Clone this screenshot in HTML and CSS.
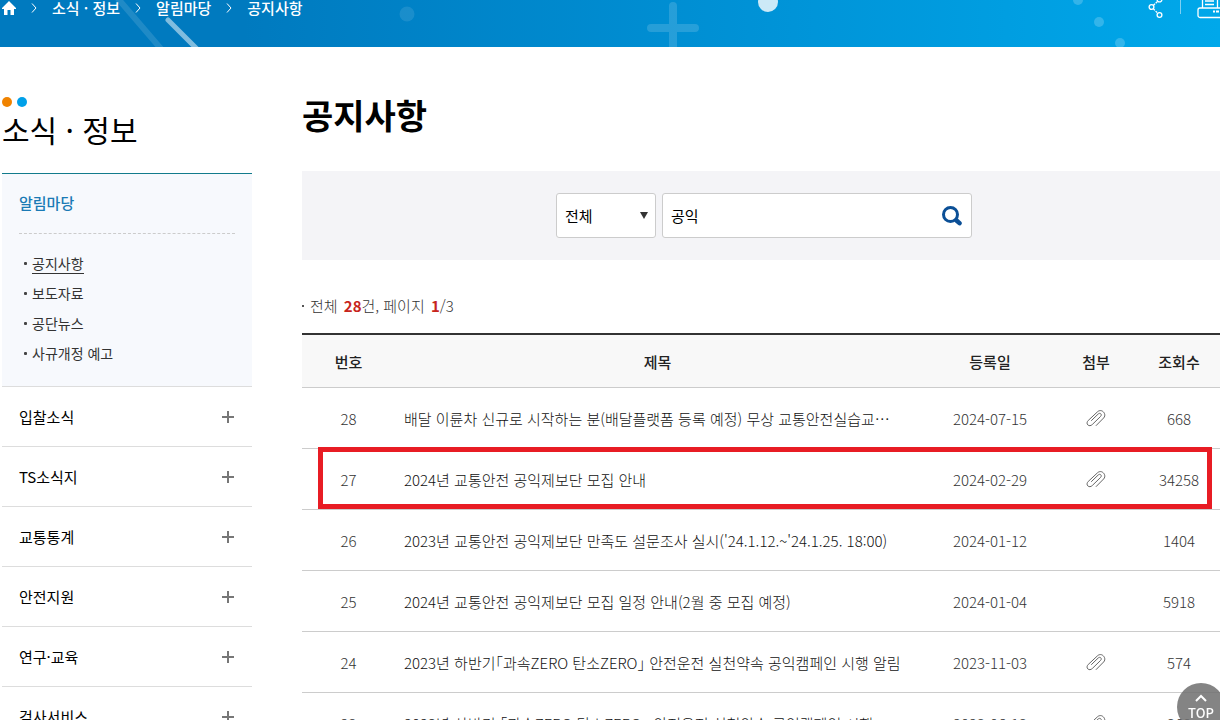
FILE: index.html
```html
<!DOCTYPE html>
<html lang="ko">
<head>
    <meta charset="UTF-8">
    <meta name="viewport" content="width=device-width, initial-scale=1.0">
    <title>공지사항</title>
    <link rel="stylesheet" href="styles.css">
</head>
<body>
    <svg class="defs" width="0" height="0">
        <symbol id="clip" viewBox="0 0 20 18">
            <path d="M10.2 16.5 17.6 9c2.600-2.600.6-6.500-2.200-7.300-1.500-.4-2.900.1-4 1.200L2.200 11.500c-1.400 1.400-1.500 3.200-.4 4.400 1.200 1.200 3.100 1 4.500-.4l8.200-8c.9-.9 1-2 .3-2.700-.7-.7-1.800-.6-2.700.3L5.500 11.500" fill="none" stroke="#666" stroke-width="1" stroke-linecap="round"/>
        </symbol>
    </svg>

    <header class="banner">
        <svg class="banner-art" width="1220" height="47" viewBox="0 0 1220 47">
            <g stroke="#fff" stroke-linecap="round" fill="none">
                <path d="M114-6l48 56" stroke-width="6" opacity=".12"/>
                <path d="M168 20l30 30" stroke-width="5" opacity=".5"/>
                <path d="M673 6v45M651 28h44" stroke-width="8" opacity=".15"/>
            </g>
            <g fill="#fff">
                <circle cx="407" cy="14" r="7.500" opacity=".1"/>
                <circle cx="768" cy="2" r="10" opacity=".8"/>
                <circle cx="1078" cy="0" r="5" opacity=".2"/>
                <circle cx="1099" cy="22" r="5" opacity=".2"/>
                <circle cx="1120" cy="43" r="5" opacity=".2"/>
            </g>
        </svg>
        <nav class="breadcrumb">
            <a href="#" aria-label="홈">
                <svg width="14" height="14" viewBox="0 0 14 14"><path d="M7 0 0 7v1h2v6h3.500V9h3v5H12V8h2V7z" fill="#fff"/></svg>
            </a>
            <svg class="arrow" width="6" height="10" viewBox="0 0 6 10"><path d="M1 .5 5 5 1 9.500"/></svg>
            <a href="#">소식 · 정보</a>
            <svg class="arrow" width="6" height="10" viewBox="0 0 6 10"><path d="M1 .5 5 5 1 9.500"/></svg>
            <a href="#">알림마당</a>
            <svg class="arrow" width="6" height="10" viewBox="0 0 6 10"><path d="M1 .5 5 5 1 9.500"/></svg>
            <a href="#">공지사항</a>
        </nav>
        <div class="tools">
            <button type="button" aria-label="공유">
                <svg width="16" height="20" viewBox="0 0 16 20" fill="none" stroke="#fff" stroke-width="1.300">
                    <circle cx="3.500" cy="7" r="2.400"/><circle cx="11.500" cy="-.5" r="2.400"/><circle cx="11.500" cy="15" r="2.400"/>
                    <path d="M5.500 5.200 9.500 1.500M5.500 9l4 4" stroke-dasharray="2 1"/>
                </svg>
            </button>
            <span class="bar"></span>
            <button type="button" aria-label="인쇄">
                <svg width="26" height="20" viewBox="0 0 26 20" fill="none" stroke="#fff" stroke-width="1.300">
                    <path d="M5.500 8V-2h15V8M8 1h9M8 4.500h9"/>
                    <rect x="1" y="8" width="24" height="9.500" rx="2"/>
                    <path d="M16 11.500h2M19 11.500h3" stroke-width="2"/>
                </svg>
            </button>
        </div>
    </header>

    <div class="page">
        <aside class="sidebar">
            <div class="dots"><span></span><span></span></div>
            <h2>소식 · 정보</h2>
            <div class="current">
                <a class="current-title" href="#">알림마당</a>
                <ul>
                    <li><a class="on" href="#">공지사항</a></li>
                    <li><a href="#">보도자료</a></li>
                    <li><a href="#">공단뉴스</a></li>
                    <li><a href="#">사규개정 예고</a></li>
                </ul>
            </div>
            <ul class="menu">
                <li><a href="#">입찰소식</a></li>
                <li><a href="#">TS소식지</a></li>
                <li><a href="#">교통통계</a></li>
                <li><a href="#">안전지원</a></li>
                <li><a href="#">연구·교육</a></li>
                <li><a href="#">검사서비스</a></li>
            </ul>
        </aside>

        <main>
            <h1>공지사항</h1>

            <form class="search">
                <select aria-label="검색 구분">
                    <option>전체</option>
                    <option>제목</option>
                    <option>내용</option>
                </select>
                <div class="search-box">
                    <input type="text" value="공익" aria-label="검색어">
                    <button type="button" aria-label="검색">
                        <svg width="20" height="20" viewBox="0 0 20 20" fill="none" stroke="#0b4f96">
                            <circle cx="8.500" cy="8.500" r="7" stroke-width="3"/>
                            <path d="M14.500 14.500 17.500 17.200" stroke-width="4.500" stroke-linecap="round"/>
                        </svg>
                    </button>
                </div>
            </form>

            <p class="total">전체 <strong>28</strong>건, 페이지 <strong>1</strong>/3</p>

            <table>
                <thead>
                    <tr>
                        <th class="num">번호</th>
                        <th>제목</th>
                        <th class="date">등록일</th>
                        <th class="file">첨부</th>
                        <th class="hit">조회수</th>
                    </tr>
                </thead>
                <tbody>
                    <tr>
                        <td>28</td>
                        <td class="subject"><a href="#">배달 이륜차 신규로 시작하는 분(배달플랫폼 등록 예정) 무상 교통안전실습교…</a></td>
                        <td>2024-07-15</td>
                        <td><svg class="clip"><use href="#clip"/></svg></td>
                        <td class="hit">668</td>
                    </tr>
                    <tr class="marked">
                        <td>27</td>
                        <td class="subject"><a href="#">2024년 교통안전 공익제보단 모집 안내</a></td>
                        <td>2024-02-29</td>
                        <td><svg class="clip"><use href="#clip"/></svg></td>
                        <td class="hit">34258</td>
                    </tr>
                    <tr>
                        <td>26</td>
                        <td class="subject"><a href="#">2023년 교통안전 공익제보단 만족도 설문조사 실시('24.1.12.~'24.1.25. 18:00)</a></td>
                        <td>2024-01-12</td>
                        <td></td>
                        <td class="hit">1404</td>
                    </tr>
                    <tr>
                        <td>25</td>
                        <td class="subject"><a href="#">2024년 교통안전 공익제보단 모집 일정 안내(2월 중 모집 예정)</a></td>
                        <td>2024-01-04</td>
                        <td></td>
                        <td class="hit">5918</td>
                    </tr>
                    <tr>
                        <td>24</td>
                        <td class="subject"><a href="#">2023년 하반기｢과속ZERO 탄소ZERO｣ 안전운전 실천약속 공익캠페인 시행 알림</a></td>
                        <td>2023-11-03</td>
                        <td><svg class="clip"><use href="#clip"/></svg></td>
                        <td class="hit">574</td>
                    </tr>
                    <tr>
                        <td>23</td>
                        <td class="subject"><a href="#">2023년 상반기 ｢과속ZERO 탄소ZERO｣ 안전운전 실천약속 공익캠페인 시행…</a></td>
                        <td>2023-06-13</td>
                        <td><svg class="clip"><use href="#clip"/></svg></td>
                        <td class="hit">368</td>
                    </tr>
                </tbody>
            </table>
        </main>
    </div>

    <button type="button" class="top-btn" onclick="window.scrollTo(0, 0)">
        <svg width="12" height="8" viewBox="0 0 12 8"><path d="M1 7l5-5 5 5" fill="none" stroke="#fff" stroke-width="2"/></svg>
        TOP
    </button>
</body>
</html>
```
FILE: styles.css
```css
* {
    box-sizing: border-box;
}

body {
    margin: 0;
    font-family: "Noto Sans CJK KR", sans-serif;
    font-size: 15px;
    color: #000;
    background: #fff;
    overflow-x: hidden;
}

a {
    color: inherit;
    text-decoration: none;
}

ul {
    list-style: none;
    margin: 0;
    padding: 0;
}

button {
    border: none;
    background: none;
    padding: 0;
    cursor: pointer;
}

svg {
    display: block;
}

.defs {
    position: absolute;
}

/* Top banner */
.banner {
    position: relative;
    height: 47px;
    display: flex;
    justify-content: space-between;
    align-items: flex-start;
    padding-left: 2px;
    background: linear-gradient(90deg, #007abf 20%, #0094d8 65%, #00a8ea);
    overflow: hidden;
}

.banner-art {
    position: absolute;
    top: 0;
    left: 0;
}

.breadcrumb {
    position: relative;
    display: flex;
    align-items: center;
    height: 15px;
    gap: 15px;
    color: #fff;
    font-size: 15px;
    font-weight: 500;
    white-space: nowrap;
}

.arrow path {
    fill: none;
    stroke: #fff;
}

.tools {
    position: relative;
    display: flex;
    gap: 16px;
    margin-right: -3px;
}

.bar {
    width: 1px;
    height: 14px;
    background: #7fd0f3;
}

/* Page columns */
.page {
    display: flex;
    gap: 50px;
    padding-left: 2px;
}

.sidebar {
    flex: 0 0 250px;
    padding-top: 50px;
}

.dots {
    display: flex;
    gap: 5px;
}

.dots span {
    width: 10px;
    height: 10px;
    border-radius: 50%;
    background: #f08300;
}

.dots span + span {
    background: #00a0e9;
}

h2 {
    margin: 0 0 22px;
    font-size: 30px;
    font-weight: 400;
    line-height: 44px;
}

.current {
    border-top: 1px solid #127b8c;
    background: #f7f9fd;
    padding: 0 17px 18px;
}

.current-title {
    display: block;
    padding-bottom: 2px;
    line-height: 57px;
    border-bottom: 1px dashed #ccc;
    color: #1a7ab5;
    font-weight: 500;
}

.current ul {
    padding-top: 14px;
}

.current li {
    display: flex;
    align-items: center;
    gap: 5px;
    height: 30px;
    padding-left: 5px;
    font-size: 14px;
    line-height: 20px;
    color: #333;
}

.current li::before {
    content: "";
    width: 3px;
    height: 3px;
    border-radius: 1px;
    background: #444;
}

.current .on {
    border-bottom: 1px solid #333;
}

.menu li {
    border-top: 1px solid #ddd;
}

.menu a {
    display: flex;
    align-items: center;
    justify-content: space-between;
    height: 59px;
    padding: 0 18px 0 17px;
}

/* plus sign */
.menu a::after {
    content: "";
    width: 12px;
    height: 12px;
    background:
        linear-gradient(#777, #777) center / 12px 2px no-repeat,
        linear-gradient(#777, #777) center / 2px 12px no-repeat;
}

/* Main column */
main {
    flex: 1;
    min-width: 0;
    padding-top: 43px;
}

h1 {
    margin: 0 0 31px;
    font-size: 34px;
    font-weight: 700;
    line-height: 50px;
}

.search {
    display: flex;
    justify-content: center;
    gap: 6px;
    padding: 22px 0 22px 6px;
    background: #f4f4f7;
}

.search select,
.search-box {
    height: 45px;
    border: 1px solid #ccc;
    border-radius: 3px;
    background: #fff;
}

.search select {
    appearance: none;
    width: 100px;
    padding: 0 8px;
    font: inherit;
    font-size: 15px;
    color: #000;
    background: #fff url("data:image/svg+xml,%3Csvg xmlns='http://www.w3.org/2000/svg' width='8' height='7'%3E%3Cpath d='M0 0h8L4 7z' fill='%23333'/%3E%3C/svg%3E") no-repeat right 7px center;
}

.search-box {
    display: flex;
    align-items: center;
    width: 310px;
    padding: 0 9px 0 8px;
}

.search-box input {
    flex: 1;
    min-width: 0;
    border: none;
    outline: none;
    padding: 0;
    font: inherit;
}

.total {
    display: flex;
    align-items: center;
    margin: 31px 0 12px;
    font-size: 15px;
    font-weight: 300;
    line-height: 30px;
    color: #333;
    white-space: pre;
}

.total::before {
    content: "";
    width: 2px;
    height: 2px;
    margin-right: 6px;
    background: #555;
}

.total strong {
    margin-left: 2px;
    color: #c7251c;
    font-weight: 700;
}

/* Notice table */
table {
    width: 100%;
    table-layout: fixed;
    border-spacing: 0;
    border-top: 2px solid #333;
}

th,
td {
    height: 61px;
    padding: 0;
    border-bottom: 1px solid #ccc;
    text-align: center;
    font-weight: 300;
    color: #333;
}

th {
    height: 53px;
    background: #f8f8f8;
    font-weight: 500;
    color: #222;
}

.num {
    width: 93px;
}

.date {
    width: 140px;
}

.file {
    width: 72px;
}

.hit {
    width: 88px;
    padding-left: 6px;
}

.subject {
    padding: 0 9px;
    text-align: left;
    color: #111;
    white-space: nowrap;
}

.clip {
    width: 20px;
    height: 18px;
    margin: 0 auto;
}

/* Red frame round the marked row */
.marked {
    position: relative;
}

.marked td:first-child::after {
    content: "";
    position: absolute;
    top: -2px;
    bottom: 1px;
    left: 16px;
    right: 8px;
    border: 5px solid #e81c24;
}

/* Scroll to top */
.top-btn {
    position: fixed;
    right: -5px;
    bottom: -11px;
    display: flex;
    flex-direction: column;
    align-items: center;
    width: 48px;
    height: 48px;
    padding-top: 11px;
    border-radius: 50%;
    background: rgba(110, 110, 110, 0.85);
    color: #fff;
    font-family: inherit;
    font-size: 13px;
    font-weight: 500;
    line-height: 21px;
}
```
